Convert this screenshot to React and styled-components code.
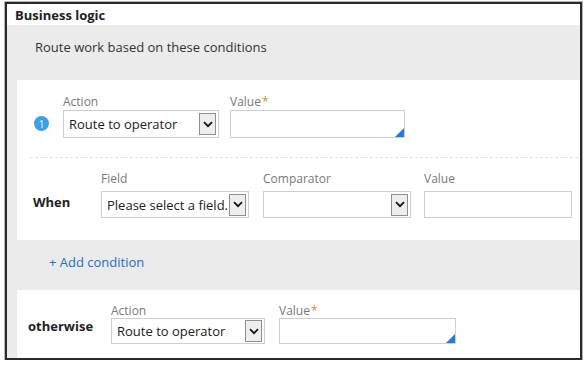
import React from "react";
import styled, { createGlobalStyle } from "styled-components";

const GlobalStyle = createGlobalStyle`
  html, body {
    margin: 0;
    padding: 0;
    background: #ffffff;
  }
  body {
    font-family: "Open Sans", "Noto Sans", sans-serif;
    color: #2b2b2b;
  }
`;

const Frame = styled.section`
  margin: 2px 0 0 5px;
  width: 577px;
  height: 358px;
  box-sizing: border-box;
  border: 2px solid #2a2a2a;
  box-shadow: 0 0 0 1px #b5b5b5;
  display: flex;
  flex-direction: column;
  overflow: hidden;
`;

const Header = styled.header`
  height: 21px;
  padding-left: 8px;
  display: flex;
  align-items: center;
  font-size: 13px;
  font-weight: 700;
  color: #222;
  background: #fff;
`;

const Body = styled.div`
  flex: 1;
  background: #ebebeb;
  padding-left: 10px;
  display: flex;
  flex-direction: column;
`;

const Intro = styled.div`
  height: 55px;
  box-sizing: border-box;
  padding: 13px 0 0 18px;
  line-height: 18px;
  font-size: 13px;
  color: #333;
`;

const Card = styled.div`
  flex: ${(p) => (p.$fill ? 1 : "none")};
  background: #fff;
  padding: ${(p) => p.$pad || "0"};
  display: flex;
  flex-direction: column;
`;

const Row = styled.div`
  display: flex;
  align-items: flex-end;
  gap: ${(p) => p.$gap || "12px"};
  padding-left: ${(p) => p.$indent || "0"};
`;

const Badge = styled.span`
  width: 15px;
  height: 15px;
  border-radius: 50%;
  background: #3ba0f0;
  color: #fff;
  font-size: 10px;
  display: flex;
  align-items: center;
  justify-content: center;
  margin-bottom: 7px;
`;

const RowTitle = styled.span`
  width: ${(p) => p.$w};
  font-size: 13px;
  font-weight: 700;
  color: #222;
  line-height: 18px;
  margin-bottom: ${(p) => p.$lift};
`;

const Field = styled.div`
  width: ${(p) => p.$w};
  display: flex;
  flex-direction: column;
`;

const Label = styled.label`
  font-size: 12px;
  line-height: 15px;
  color: #7a7a7a;
  margin-bottom: ${(p) => p.$space || "1px"};
`;

const Star = styled.span`
  color: #e0892d;
  margin-left: 1px;
`;

const Box = styled.div`
  position: relative;
  height: ${(p) => p.$h || "28px"};
  box-sizing: border-box;
  border: 1px solid #cfcfcf;
  background: #fff;
  display: flex;
  align-items: center;
  padding: 0 2px 0 5px;
  font-size: 13px;
  color: #222;
`;

const BoxText = styled.span`
  flex: 1;
  white-space: nowrap;
  overflow: hidden;
`;

const Arrow = styled.span`
  width: 17px;
  height: 22px;
  box-sizing: border-box;
  border: 1px solid #8f8f8f;
  background: #eeeeee;
  display: flex;
  align-items: center;
  justify-content: center;
`;

const Corner = styled.span`
  position: absolute;
  right: 0;
  bottom: 0;
  width: 0;
  height: 0;
  border-style: solid;
  border-width: 0 0 9px 9px;
  border-color: transparent transparent #1f7ae8 transparent;
`;

const Divider = styled.hr`
  border: none;
  border-top: 1px dashed #e2e2e2;
  margin: 19px 2px 13px 13px;
`;

const Band = styled.div`
  height: 50px;
  box-sizing: border-box;
  padding: 13px 0 0 32px;
  line-height: 18px;
  font-size: 13px;
  color: #1b6fc8;
`;

const Chevron = () => (
  <svg width="10" height="7" viewBox="0 0 10 7">
    <path d="M1 1.2 L5 5.2 L9 1.2" fill="none" stroke="#111" strokeWidth="1.7" />
  </svg>
);

const Select = ({ value, h }) => (
  <Box $h={h}>
    <BoxText>{value}</BoxText>
    <Arrow>
      <Chevron />
    </Arrow>
  </Box>
);

const TextInput = ({ h, resizable }) => (
  <Box $h={h}>{resizable && <Corner />}</Box>
);

export default function App() {
  return (
    <>
      <GlobalStyle />
      <Frame>
        <Header>Business logic</Header>
        <Body>
          <Intro>Route work based on these conditions</Intro>
          <Card $pad="14px 0 22px 0">
            <Row $indent="17px" $gap="14px">
              <Badge>1</Badge>
              <Field $w="156px">
                <Label>Action</Label>
                <Select value="Route to operator" />
              </Field>
              <Field $w="175px" style={{ marginLeft: "-3px" }}>
                <Label>
                  Value<Star>*</Star>
                </Label>
                <TextInput resizable />
              </Field>
            </Row>
            <Divider />
            <Row $indent="16px" $gap="14px">
              <RowTitle $w="54px" $lift="7px">When</RowTitle>
              <Field $w="148px">
                <Label $space="5px">Field</Label>
                <Select value="Please select a field." h="27px" />
              </Field>
              <Field $w="148px">
                <Label $space="5px">Comparator</Label>
                <Select value="" h="27px" />
              </Field>
              <Field $w="148px" style={{ marginLeft: "-1px" }}>
                <Label $space="5px">Value</Label>
                <TextInput h="27px" />
              </Field>
            </Row>
          </Card>
          <Band>+ Add condition</Band>
          <Card $fill $pad="13px 0 0 0">
            <Row $indent="11px" $gap="14px">
              <RowTitle $w="69px" $lift="9px">otherwise</RowTitle>
              <Field $w="154px">
                <Label $space="0px">Action</Label>
                <Select value="Route to operator" h="26px" />
              </Field>
              <Field $w="177px">
                <Label $space="0px">
                  Value<Star>*</Star>
                </Label>
                <TextInput h="26px" resizable />
              </Field>
            </Row>
          </Card>
        </Body>
      </Frame>
    </>
  );
}
